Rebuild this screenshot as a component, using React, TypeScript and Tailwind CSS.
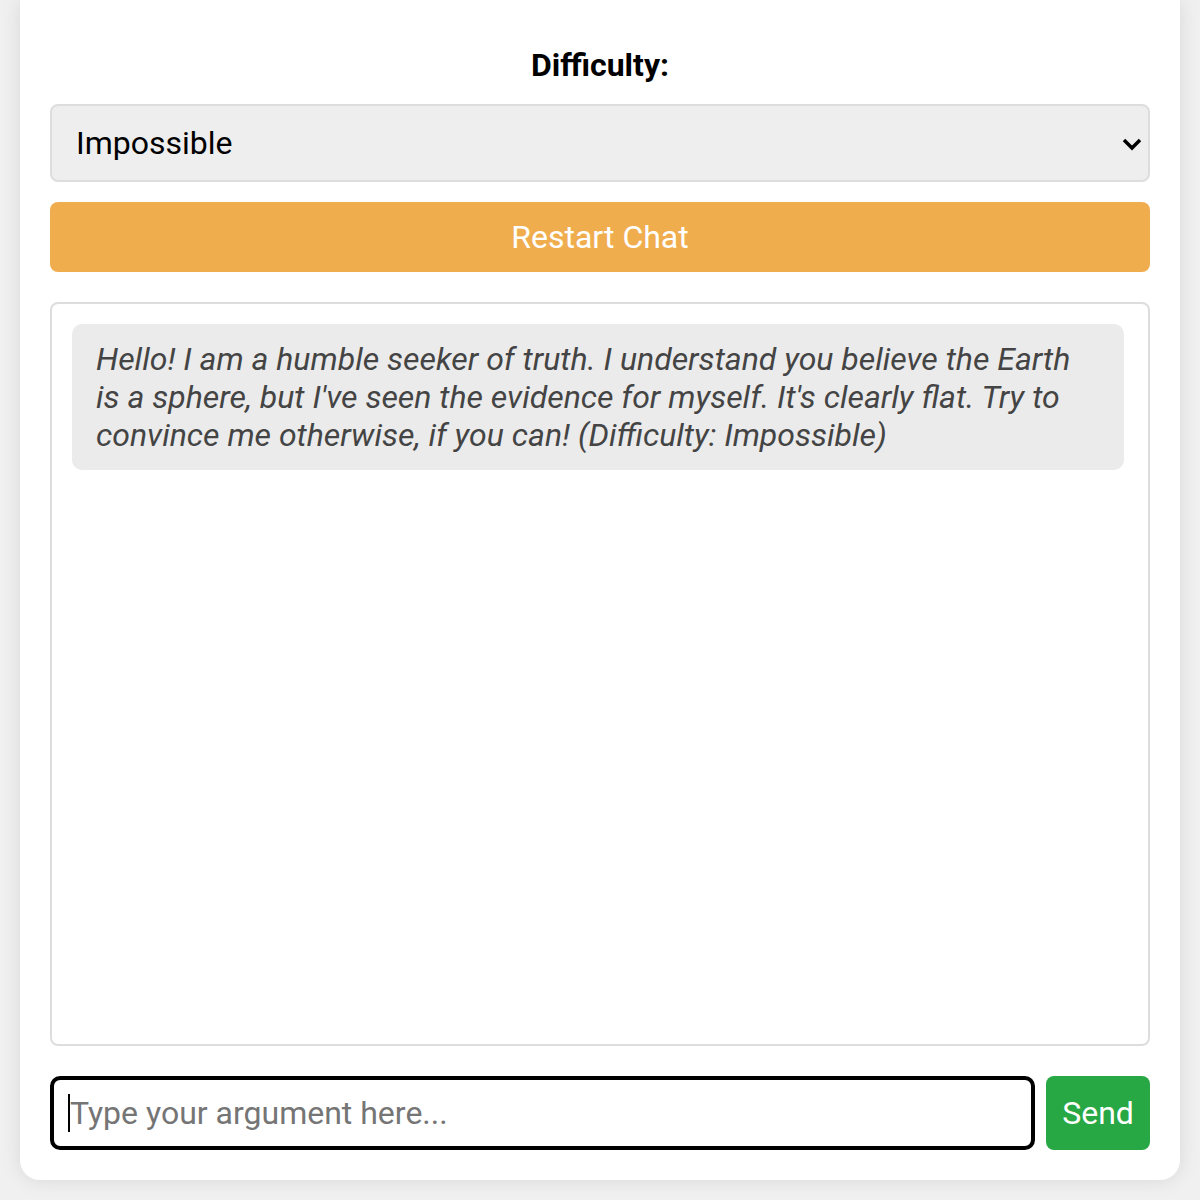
export default function App() {
  return (
    <div className="min-h-screen bg-[#f0f0f0] px-[20px] pb-[20px] font-['Roboto',sans-serif]">
      <div className="flex flex-col rounded-b-[20px] bg-white px-[30px] pt-[46px] pb-[30px] shadow-[0_0_20px_rgba(0,0,0,0.1)]">
        <label className="mb-[20px] text-center text-[32px] leading-[38px] font-bold text-black">
          Difficulty:
        </label>

        <div className="relative mb-[20px]">
          <select
            defaultValue="impossible"
            className="h-[78px] w-full appearance-none rounded-[8px] border-2 border-[#dddddd] bg-[#eeeeee] px-[24px] text-[32px] text-black outline-none"
          >
            <option value="easy">Easy</option>
            <option value="medium">Medium</option>
            <option value="hard">Hard</option>
            <option value="impossible">Impossible</option>
          </select>
          <svg
            className="pointer-events-none absolute top-[33px] right-[8px] h-[14px] w-[20px]"
            viewBox="0 0 20 14"
            fill="none"
            stroke="black"
            strokeWidth="3.5"
          >
            <path d="M2 3 L10 11 L18 3" />
          </svg>
        </div>

        <button className="h-[70px] w-full rounded-[8px] bg-[#f0ad4e] text-[32px] text-white">
          Restart Chat
        </button>

        <div className="mt-[30px] h-[744px] rounded-[8px] border-2 border-[#dddddd] py-[20px] pr-[24px] pl-[20px]">
          <div className="rounded-[10px] bg-[#ebebeb] py-[16px] pr-[28px] pl-[24px] text-[32px] leading-[38px] text-[#444444] italic">
            Hello! I am a humble seeker of truth. I understand you believe the Earth is a sphere, but I've seen the evidence for myself. It's clearly flat. Try to convince me otherwise, if you can! (Difficulty: Impossible)
          </div>
        </div>

        <div className="mt-[30px] flex gap-[11px]">
          <div className="relative flex-1">
            <input
              type="text"
              placeholder="Type your argument here..."
              className="h-[74px] w-full rounded-[10px] border-4 border-black px-[16px] text-[32px] text-black outline-none placeholder:text-[#757575]"
            />
            <span className="pointer-events-none absolute top-[18px] left-[18px] h-[38px] w-[2px] bg-black" />
          </div>
          <button className="h-[74px] w-[104px] rounded-[8px] bg-[#28a745] text-[32px] text-white">
            Send
          </button>
        </div>
      </div>
    </div>
  );
}
